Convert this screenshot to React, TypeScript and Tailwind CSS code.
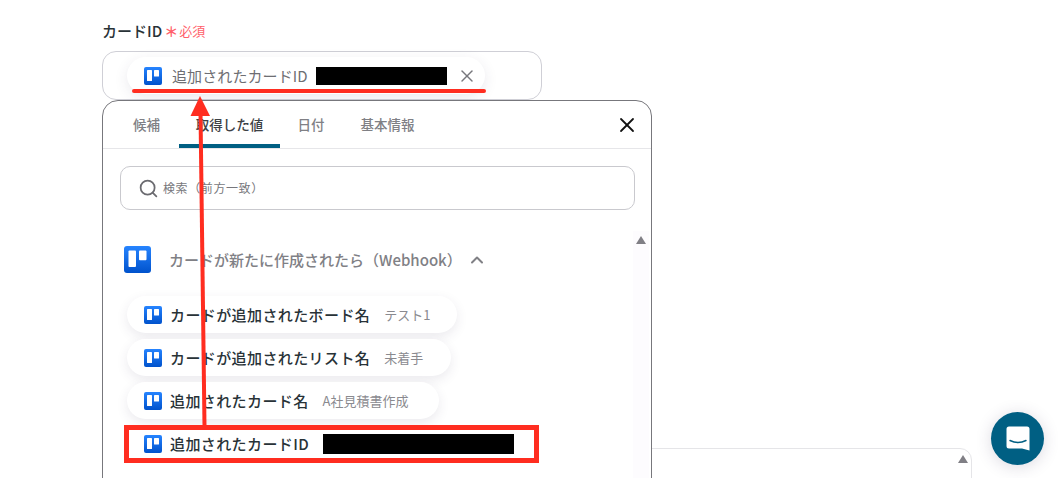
import React from 'react';
import { X, Search, ChevronUp } from 'lucide-react';

const font = { fontFamily: '"Noto Sans CJK JP", "Noto Sans", sans-serif' };

function TrelloIcon({ size = 18 }: { size?: number }) {
  const id = `trello-${size}`;
  return (
    <svg width={size} height={size} viewBox="0 0 18 18" className="shrink-0">
      <defs>
        <linearGradient id={id} x1="0" y1="0" x2="0" y2="1">
          <stop offset="0" stopColor="#2684ff" />
          <stop offset="1" stopColor="#0052cc" />
        </linearGradient>
      </defs>
      <rect width="18" height="18" rx="2" fill={`url(#${id})`} />
      <rect x="3" y="3" width="5" height="11" rx="0.6" fill="#fff" />
      <rect x="10" y="3" width="5" height="6.5" rx="0.6" fill="#fff" />
    </svg>
  );
}

function ValueChip({ name, value, className }: { name: string; value: string; className: string }) {
  return (
    <div className={`flex h-[37px] items-center rounded-full bg-white pl-[17px] shadow-[0_4px_12px_rgba(60,50,90,0.1)] ${className}`}>
      <TrelloIcon />
      <span className="ml-2 text-[15px] leading-none font-medium tracking-[0.4px] whitespace-nowrap text-[#283237]">{name}</span>
      <span className="ml-[14px] text-[13px] leading-none whitespace-nowrap text-[#8a8a8f]">{value}</span>
    </div>
  );
}

export default function App() {
  return (
    <div className="relative h-[478px] w-[1064px] overflow-hidden bg-white" style={font}>
      {/* panel behind the popup */}
      <div className="absolute top-[448px] left-[600px] h-[60px] w-[372px] rounded-tr-xl border border-[#e5e5e8]">
        <div className="absolute top-[6px] right-[3px] h-0 w-0 border-x-[5px] border-b-[8px] border-x-transparent border-b-[#807f85]" />
      </div>

      <div className="relative ml-[102px] w-[550px] pt-[20px]">
        <div className="flex h-[21px] items-center">
          <span className="text-[15px] leading-none font-medium text-[#283237]">カードID</span>
          <span className="ml-[2px] text-[14px] leading-none font-bold text-[#ff5f6b]">＊</span>
          <span className="ml-[1px] text-[13px] leading-none text-[#ff5f6b]">必須</span>
        </div>

        {/* selected value */}
        <div className="mt-[10px] flex h-[49px] w-[440px] items-center rounded-[14px] border border-[#cfcfd6] pl-[24px]">
          <div className="flex h-[37px] w-[358px] items-center rounded-full bg-white pl-[17px] shadow-[0_4px_14px_rgba(60,50,90,0.1)]">
            <TrelloIcon />
            <span className="ml-[10px] text-[15px] leading-none tracking-[0.1px] whitespace-nowrap text-[#6e6e73]">追加されたカードID</span>
            <span className="ml-2 h-[18px] w-[131px] bg-black" />
            <X size={20} strokeWidth={1.7} className="ml-[10px] text-[#77777c]" />
          </div>
        </div>

        {/* popup */}
        <div className="relative h-[420px] w-[550px] rounded-t-[16px] border border-[#77777c] bg-white">
          <div className="flex h-[48px] items-center border-b border-[#e6e6e9] pl-[3px]">
            <div className="flex h-[47px] w-[73px] items-center justify-center pl-[8px] text-[13.5px] font-medium text-[#808085]">候補</div>
            <div className="flex h-[47px] w-[101px] items-center justify-center border-b-[4px] border-[#005f83] pt-[4px] text-[13.5px] font-medium text-[#3d4145]">取得した値</div>
            <div className="flex h-[47px] w-[62px] items-center justify-center text-[13.5px] font-medium text-[#808085]">日付</div>
            <div className="flex h-[47px] w-[91px] items-center justify-center text-[13.5px] font-medium whitespace-nowrap text-[#808085]">基本情報</div>
            <X size={24} strokeWidth={1.8} className="ml-auto mr-[12px] text-[#111]" />
          </div>

          <div className="pt-[17px] pl-[17px]">
            <div className="flex h-[44px] w-[515px] items-center rounded-[10px] border border-[#c9c9ce] pl-[17px]">
              <Search size={21} strokeWidth={2} className="text-[#6b6b70]" />
              <span className="ml-[4px] text-[12px] leading-none tracking-[0.6px] text-[#77777c]">検索（前方一致）</span>
            </div>
          </div>

          <div className="mt-[36px] ml-[21px] flex items-center">
            <TrelloIcon size={27} />
            <span className="ml-[18px] text-[15px] leading-none font-medium whitespace-nowrap text-[#808085]">カードが新たに作成されたら（Webhook）</span>
            <ChevronUp size={20} strokeWidth={2.4} className="ml-[5px] text-[#808085]" />
          </div>

          <div className="mt-[23px] ml-[24px] flex flex-col gap-[6px]">
            <ValueChip name="カードが追加されたボード名" value="テスト1" className="w-[330px]" />
            <ValueChip name="カードが追加されたリスト名" value="未着手" className="w-[324px]" />
            <ValueChip name="追加されたカード名" value="A社見積書作成" className="w-[312px]" />
            <div className="flex h-[37px] w-[410px] items-center rounded-full bg-white pl-[17px]">
              <TrelloIcon />
              <span className="ml-2 text-[15px] leading-none font-medium tracking-[0.4px] whitespace-nowrap text-[#283237]">追加されたカードID</span>
              <span className="ml-[14px] h-[20px] w-[191px] bg-black" />
            </div>
          </div>

          {/* scrollbar */}
          <div className="absolute top-[130px] right-[2px] bottom-0 w-[16px] bg-[#fdfcfe]">
            <div className="mx-auto mt-[5px] h-0 w-0 border-x-[5px] border-b-[8px] border-x-transparent border-b-[#807f85]" />
          </div>
        </div>
      </div>

      {/* annotations */}
      <div className="absolute top-[89px] left-[132px] h-[4px] w-[354px] rounded-full bg-[#ff2d20]" />
      <div className="absolute top-[425px] left-[124px] h-[38px] w-[415px] border-[5px] border-[#ff2d20]" />
      <svg className="absolute inset-0" width="1064" height="478" fill="none">
        <path d="M204.5 426 L200.5 112" stroke="#ff2d20" strokeWidth="4" />
        <path d="M200 96 L210 116 H190.5 Z" fill="#ff2d20" />
      </svg>

      {/* chat button */}
      <div className="absolute top-[412px] left-[991px] flex h-[53px] w-[53px] items-center justify-center rounded-full bg-[#005f83] shadow-[0_2px_16px_rgba(60,50,90,0.18)]">
        <svg width="24" height="27" viewBox="0 0 24 27">
          <path d="M3 1.5 H21 A2.5 2.5 0 0 1 23.5 4 V25.5 L16 23.5 H3 A2.5 2.5 0 0 1 .5 21 V4 A2.5 2.5 0 0 1 3 1.5 Z" fill="#fff" />
          <path d="M4 15.5 Q12 19.5 20 15.5" stroke="#005f83" strokeWidth="1.5" fill="none" strokeLinecap="round" />
        </svg>
      </div>
    </div>
  );
}
